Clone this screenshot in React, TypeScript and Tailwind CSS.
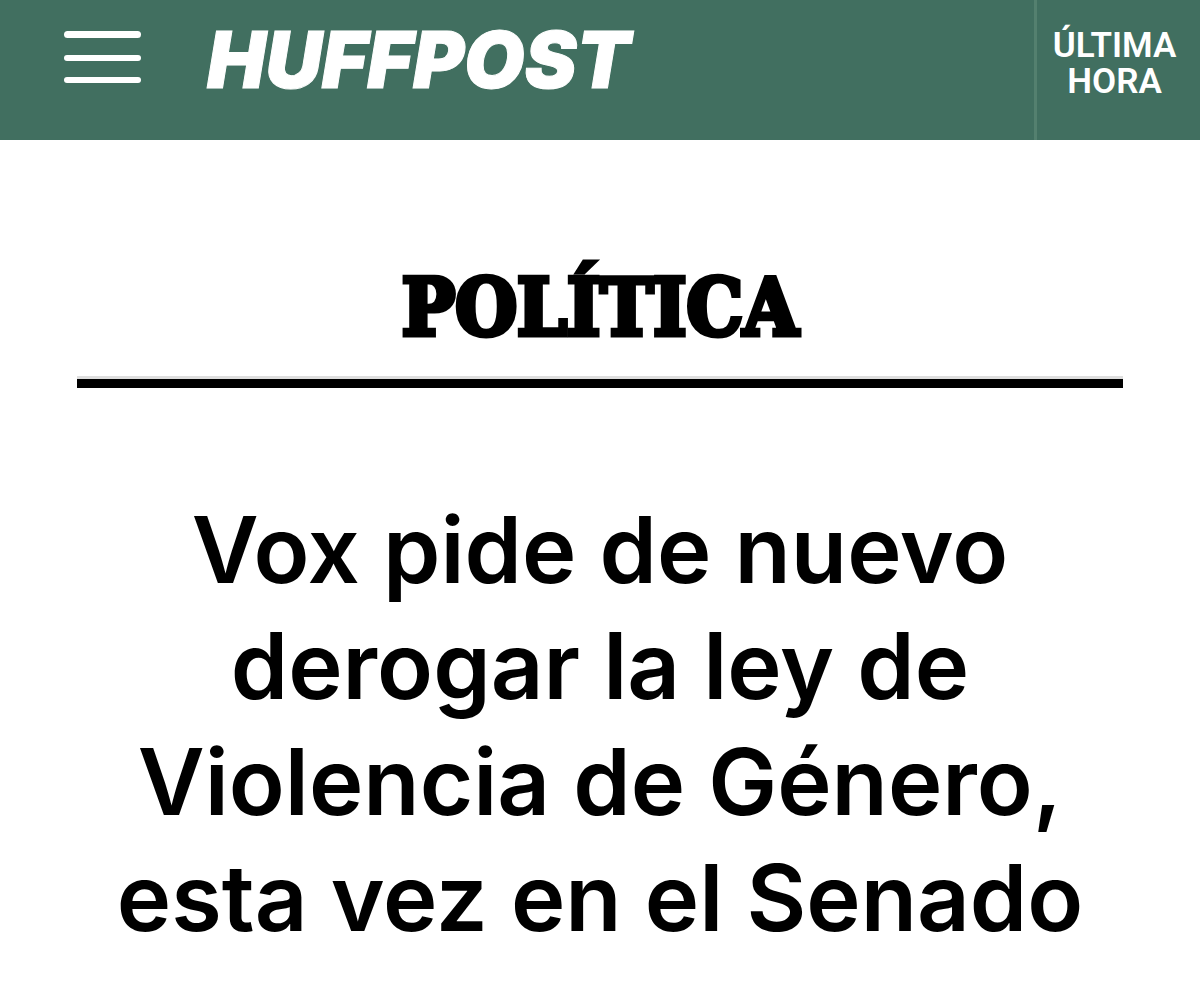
import React from 'react';

const HEADLINE_LINES = [
	'Vox pide de nuevo',
	'derogar la ley de',
	'Violencia de Género,',
	'esta vez en el Senado',
];

function Header() {
	return (
		<header className="flex h-[140px] items-stretch bg-[#416f60] text-white">
			<button type="button" aria-label="Abrir menú" className="mt-[31px] ml-16 flex h-[52px] w-[77px] flex-col justify-between">
				<span className="h-[7px] w-full rounded-full bg-white" />
				<span className="h-[6px] w-full rounded-full bg-white" />
				<span className="h-[6px] w-full rounded-full bg-white" />
			</button>
			<a href="#" className="mt-5 ml-[66px] font-[Inter,sans-serif] text-[78px] leading-[80px] font-black italic [-webkit-text-stroke:1px_white]">
				HUFFPOST
			</a>
			<a href="#" className="ml-auto w-[166px] border-l-3 border-[#54806f] px-2 pt-[28px] pr-4 text-center font-[Roboto,sans-serif] text-[35px] leading-9 font-semibold">
				ÚLTIMA HORA
			</a>
		</header>
	);
}

export default function App() {
	return (
		<div className="min-h-screen bg-white text-black">
			<Header />
			<main className="px-[77px] text-center">
				<div className="border-b-3 border-[#dedede] pt-[124px] pb-6">
					<a href="#" className="block font-['DejaVu_Serif_Condensed','DejaVu_Serif',serif] text-[79px] leading-[88px] font-bold [-webkit-text-stroke:5px_black]">
						POLÍTICA
					</a>
				</div>
				<hr className="h-[9px] border-0 bg-black" />
				<h1 className="mt-[104px] font-[Inter,sans-serif] text-[92px] leading-[116px] font-semibold">
					{HEADLINE_LINES.map((line) => (
						<span key={line} className="block whitespace-nowrap">{line}</span>
					))}
				</h1>
			</main>
		</div>
	);
}
